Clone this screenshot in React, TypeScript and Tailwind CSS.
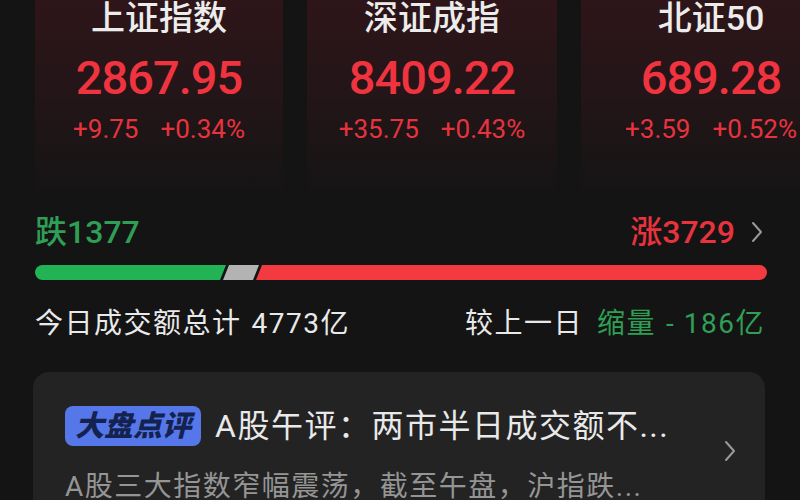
import React from "react";

const indices = [
    { name: "上证指数", value: "2867.95", change: "+9.75", pct: "+0.34%", width: "w-[248px]" },
    { name: "深证成指", value: "8409.22", change: "+35.75", pct: "+0.43%", width: "w-[250px]" },
    { name: "北证50", value: "689.28", change: "+3.59", pct: "+0.52%", width: "w-[260px]" },
];

const Chevron = ({ className }: { className?: string }) => (
    <svg viewBox="0 0 16 24" className={className} fill="none" stroke="currentColor" strokeWidth="2" strokeLinecap="round" strokeLinejoin="round">
        <polyline points="4,3 12,12 4,21" />
    </svg>
);

const BreadthBar = () => (
    <svg viewBox="0 0 732 15" className="w-[732px] h-[15px] block">
        <defs>
            <clipPath id="barclip">
                <rect x="0" y="0" width="732" height="15" rx="7.5" />
            </clipPath>
        </defs>
        <g clipPath="url(#barclip)">
            <polygon points="0,0 191,0 185,15 0,15" fill="#22b454" />
            <polygon points="194,0 224,0 218,15 188,15" fill="#b3b3b3" />
            <polygon points="227,0 732,0 732,15 221,15" fill="#f23a40" />
        </g>
    </svg>
);

export default function App() {
    return (
        <div className="w-[800px] h-[500px] overflow-hidden bg-[#141414] text-[#e9e9e9]" style={{ fontFamily: '"Roboto", "Noto Sans CJK SC", sans-serif' }}>
            {/* index cards */}
            <div className="flex pl-[35px] gap-[24px]">
                {indices.map((item) => (
                    <div key={item.name} className={`${item.width} shrink-0 h-[192px] bg-gradient-to-b from-[#2e1519] via-[#231518] to-[#151414] flex flex-col items-center`}>
                        <div className="text-[34px] leading-[36px] font-medium text-[#ececec]">{item.name}</div>
                        <div className="text-[47px] leading-none font-medium tracking-[-1px] text-[#f0343f] mt-[18px]">{item.value}</div>
                        <div className="flex gap-[22px] text-[26px] leading-none text-[#e8333f] mt-[15px]">
                            <span>{item.change}</span>
                            <span>{item.pct}</span>
                        </div>
                    </div>
                ))}
            </div>

            {/* rise / fall */}
            <div className="px-[35px] mt-[24px] flex items-center justify-between">
                <span className="text-[32px] leading-none font-medium text-[#2e9f55]">跌1377</span>
                <div className="flex items-center gap-[14px]">
                    <span className="text-[32px] leading-none font-medium text-[#e8333f]">涨3729</span>
                    <Chevron className="w-[16px] h-[24px] text-[#9a9a9a]" />
                </div>
            </div>
            <div className="px-[35px] mt-[17px]">
                <BreadthBar />
            </div>

            {/* turnover */}
            <div className="px-[35px] mt-[30px] flex items-center justify-between text-[28px] leading-none tracking-[1.5px]">
                <span>
                    今日成交额总计<span className="ml-[10px]">4773亿</span>
                </span>
                <span className="flex items-center">
                    <span>较上一日</span>
                    <span className="ml-[14px] text-[#2f9f55]">缩量</span>
                    <span className="ml-[10px] text-[#2f9f55]">- 186亿</span>
                </span>
            </div>

            {/* commentary card */}
            <div className="ml-[33px] mt-[34px] w-[732px] h-[160px] rounded-[16px] bg-[#232323] flex items-start pl-[32px] pr-[27px] pt-[34px]">
                <div className="flex-1 min-w-0">
                    <div className="flex items-center gap-[14px]">
                        <span className="h-[40px] px-[10px] rounded-[8px] bg-[#5577ea] flex items-center text-[29px] leading-none font-black italic text-[#14224f]">大盘点评</span>
                        <span className="text-[32px] leading-none whitespace-nowrap tracking-[1.5px]">A股午评：两市半日成交额不...</span>
                    </div>
                    <div className="mt-[27px] text-[28px] leading-none text-[#959595] whitespace-nowrap tracking-[1.5px]">A股三大指数窄幅震荡，截至午盘，沪指跌...</div>
                </div>
                <Chevron className="w-[16px] h-[26px] text-[#9a9a9a] mt-[32px]" />
            </div>
        </div>
    );
}
